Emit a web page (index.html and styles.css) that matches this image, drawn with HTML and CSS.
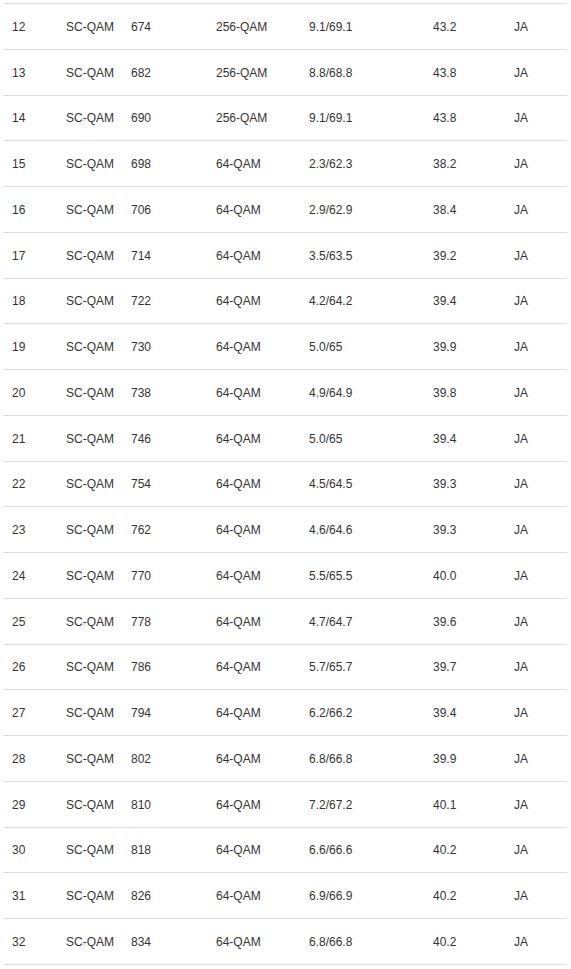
FILE: index.html
```html
<!DOCTYPE html>
<html>
<head>
<meta charset="utf-8">
<link rel="stylesheet" href="styles.css">
</head>
<body>
<table class="channels">
<colgroup>
<col class="c1"><col class="c2"><col class="c3"><col class="c4"><col class="c5"><col class="c6"><col class="c7">
</colgroup>
<tbody>
<tr><td>12</td><td>SC-QAM</td><td>674</td><td>256-QAM</td><td>9.1/69.1</td><td>43.2</td><td>JA</td></tr>
<tr><td>13</td><td>SC-QAM</td><td>682</td><td>256-QAM</td><td>8.8/68.8</td><td>43.8</td><td>JA</td></tr>
<tr><td>14</td><td>SC-QAM</td><td>690</td><td>256-QAM</td><td>9.1/69.1</td><td>43.8</td><td>JA</td></tr>
<tr><td>15</td><td>SC-QAM</td><td>698</td><td>64-QAM</td><td>2.3/62.3</td><td>38.2</td><td>JA</td></tr>
<tr><td>16</td><td>SC-QAM</td><td>706</td><td>64-QAM</td><td>2.9/62.9</td><td>38.4</td><td>JA</td></tr>
<tr><td>17</td><td>SC-QAM</td><td>714</td><td>64-QAM</td><td>3.5/63.5</td><td>39.2</td><td>JA</td></tr>
<tr><td>18</td><td>SC-QAM</td><td>722</td><td>64-QAM</td><td>4.2/64.2</td><td>39.4</td><td>JA</td></tr>
<tr><td>19</td><td>SC-QAM</td><td>730</td><td>64-QAM</td><td>5.0/65</td><td>39.9</td><td>JA</td></tr>
<tr><td>20</td><td>SC-QAM</td><td>738</td><td>64-QAM</td><td>4.9/64.9</td><td>39.8</td><td>JA</td></tr>
<tr><td>21</td><td>SC-QAM</td><td>746</td><td>64-QAM</td><td>5.0/65</td><td>39.4</td><td>JA</td></tr>
<tr><td>22</td><td>SC-QAM</td><td>754</td><td>64-QAM</td><td>4.5/64.5</td><td>39.3</td><td>JA</td></tr>
<tr><td>23</td><td>SC-QAM</td><td>762</td><td>64-QAM</td><td>4.6/64.6</td><td>39.3</td><td>JA</td></tr>
<tr><td>24</td><td>SC-QAM</td><td>770</td><td>64-QAM</td><td>5.5/65.5</td><td>40.0</td><td>JA</td></tr>
<tr><td>25</td><td>SC-QAM</td><td>778</td><td>64-QAM</td><td>4.7/64.7</td><td>39.6</td><td>JA</td></tr>
<tr><td>26</td><td>SC-QAM</td><td>786</td><td>64-QAM</td><td>5.7/65.7</td><td>39.7</td><td>JA</td></tr>
<tr><td>27</td><td>SC-QAM</td><td>794</td><td>64-QAM</td><td>6.2/66.2</td><td>39.4</td><td>JA</td></tr>
<tr><td>28</td><td>SC-QAM</td><td>802</td><td>64-QAM</td><td>6.8/66.8</td><td>39.9</td><td>JA</td></tr>
<tr><td>29</td><td>SC-QAM</td><td>810</td><td>64-QAM</td><td>7.2/67.2</td><td>40.1</td><td>JA</td></tr>
<tr><td>30</td><td>SC-QAM</td><td>818</td><td>64-QAM</td><td>6.6/66.6</td><td>40.2</td><td>JA</td></tr>
<tr><td>31</td><td>SC-QAM</td><td>826</td><td>64-QAM</td><td>6.9/66.9</td><td>40.2</td><td>JA</td></tr>
<tr><td>32</td><td>SC-QAM</td><td>834</td><td>64-QAM</td><td>6.8/66.8</td><td>40.2</td><td>JA</td></tr>
</tbody>
</table>
</body>
</html>
```
FILE: styles.css
```css
html, body {
  margin: 0;
  padding: 0;
  background: #fff;
}
body {
  padding: 3px 4px 0 3px;
  font-family: "Liberation Sans", Arial, sans-serif;
  font-size: 12px;
  color: #333;
}
.channels {
  width: 564px;
  border-collapse: collapse;
  table-layout: fixed;
  border-bottom: 1px solid #ddd;
}
.c1 { width: 54px; }
.c2 { width: 65px; }
.c3 { width: 85px; }
.c4 { width: 93px; }
.c5 { width: 124px; }
.c6 { width: 81px; }
.c7 { width: 62px; }
.channels td {
  border-top: 1px solid #ddd;
  padding: 14.8px 9px 12.96px 9px;
  line-height: 17px;
  vertical-align: middle;
  white-space: nowrap;
}
```
